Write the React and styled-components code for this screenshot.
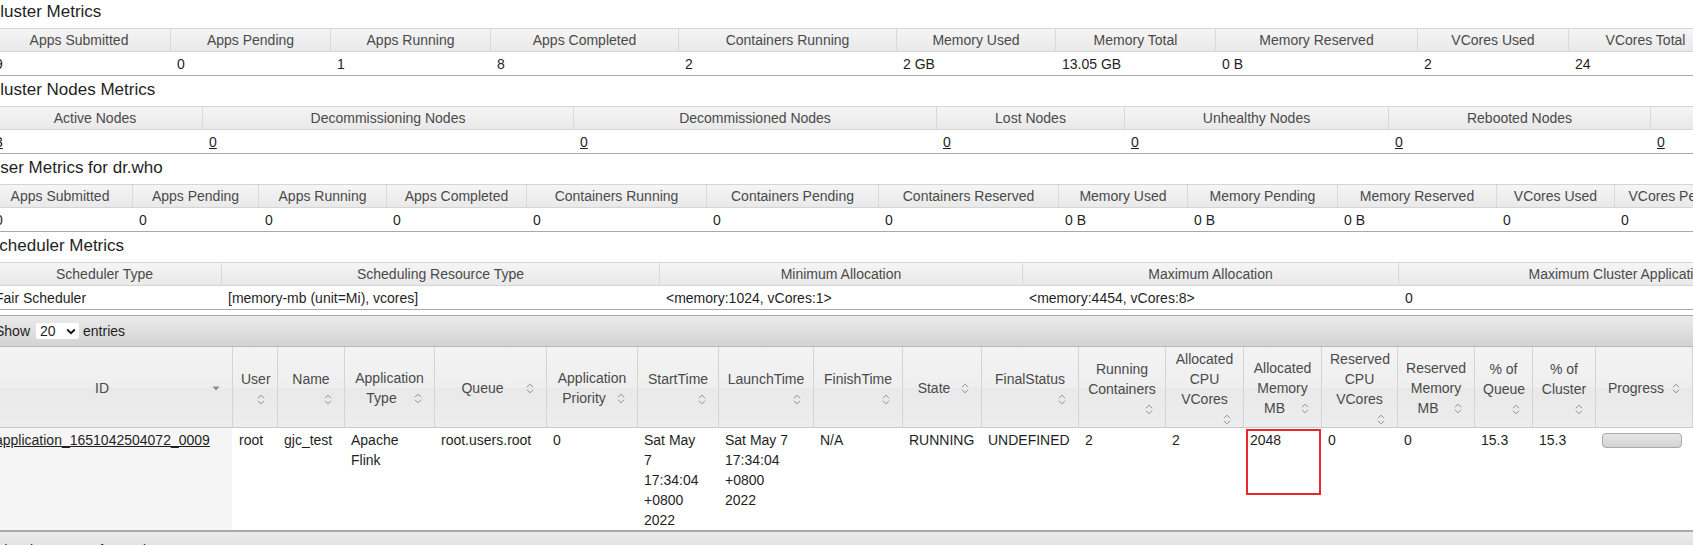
import React from 'react'
import styled, { createGlobalStyle } from 'styled-components'

const GlobalStyle = createGlobalStyle`
  *, *::before, *::after { box-sizing: border-box; }
  html, body { margin: 0; padding: 0; overflow: hidden; background: #fff; }
  body {
    font-family: "Liberation Sans", Arial, Helvetica, sans-serif;
    font-size: 14px;
    color: #1f1f1f;
  }
`

const Page = styled.div`
  width: 2200px;
  margin: -2px 0 0 -12px;
`

const SectionTitle = styled.div`
  height: 30px;
  padding: 4px 0 6px;
  font-size: 17px;
  line-height: 20px;
  white-space: nowrap;
`

const Table = styled.table`
  table-layout: fixed;
  border-collapse: separate;
  border-spacing: 0;
  width: ${(p) => p.$width}px;
`

const Col = styled.col`
  width: ${(p) => p.$w}px;
`

const MetricHead = styled.th`
  font-weight: normal;
  color: #4a4a4a;
  text-align: center;
  white-space: nowrap;
  overflow: hidden;
  padding: 1px 7px;
  line-height: 20px;
  background: linear-gradient(#f5f5f5, #e9e9e9);
  border-top: 1px solid #d5d5d5;
  border-bottom: 1px solid #d5d5d5;
  border-left: 1px solid #d9d9d9;
  &:first-child { border-left: none; }
`

const MetricCell = styled.td`
  padding: 2px 7px 1px;
  line-height: 20px;
  white-space: nowrap;
  border-bottom: 1px solid #a9a9a9;
`

const NodeLink = styled.a`
  color: inherit;
  text-decoration: underline;
`

const DataWrapper = styled.div`
  margin-top: 5px;
`

const Toolbar = styled.div`
  display: flex;
  align-items: center;
  height: 32px;
  padding: 0 7px;
  border-top: 1px solid #a8a8a8;
  border-bottom: 1px solid #b8b8b8;
  background: linear-gradient(#ebebeb, #d3d3d3);
  line-height: 20px;
`

const SelectBox = styled.div`
  display: flex;
  align-items: center;
  justify-content: space-between;
  width: 43px;
  height: 16px;
  margin: 0 4px 0 6px;
  padding: 0 3px 0 4px;
  background: #fff;
  border-radius: 2px;
`

const AppsHead = styled.th`
  font-weight: normal;
  color: #4a4a4a;
  text-align: center;
  vertical-align: middle;
  padding: 2px 8px 0;
  line-height: 20px;
  background: linear-gradient(#f3f3f3 0%, #efefef 50%, #e9e9e9 51%, #ededed 100%);
  border-left: 1px solid #d4d4d4;
  border-bottom: 1px solid #c9c9c9;
  &:first-child { border-left: none; }
`

const SortIcon = styled.span`
  float: right;
  display: flex;
  align-items: center;
  justify-content: center;
  width: 16px;
  height: 16px;
  margin-top: 2px;
`

const AppsCell = styled.td`
  position: relative;
  vertical-align: top;
  padding: 2px 15px 0 7px;
  line-height: 20px;
  border-bottom: 1px solid #acacac;
  background: ${(p) => (p.$sorted ? '#f5f5f5' : '#fff')};
`

const Highlight = styled.div`
  position: absolute;
  left: 3px;
  top: 1px;
  width: 75px;
  height: 66px;
  border: 2px solid #e8262b;
  pointer-events: none;
`

const ProgressBar = styled.div`
  width: 80px;
  height: 15px;
  margin-top: 3px;
  border: 1px solid #a9a9a9;
  border-radius: 4px;
  background: linear-gradient(#e6e6e6, #d4d4d4);
`

const Footer = styled.div`
  display: flex;
  justify-content: space-between;
  height: 40px;
  padding: 8px 7px;
  line-height: 20px;
  border-top: 1px solid #a8a8a8;
  background: linear-gradient(#ebebeb, #d3d3d3);
`

const sum = (cols) => cols.reduce((a, b) => a + b, 0)

const sections = [
  {
    title: 'Cluster Metrics',
    cols: [182, 160, 160, 188, 218, 159, 160, 202, 151, 154, 150],
    heads: ['Apps Submitted', 'Apps Pending', 'Apps Running', 'Apps Completed', 'Containers Running', 'Memory Used', 'Memory Total', 'Memory Reserved', 'VCores Used', 'VCores Total', 'VCores Reserved'],
    values: ['9', '0', '1', '8', '2', '2 GB', '13.05 GB', '0 B', '2', '24', '0'],
  },
  {
    title: 'Cluster Nodes Metrics',
    cols: [214, 371, 363, 188, 264, 262, 200],
    heads: ['Active Nodes', 'Decommissioning Nodes', 'Decommissioned Nodes', 'Lost Nodes', 'Unhealthy Nodes', 'Rebooted Nodes', 'Shutdown Nodes'],
    values: ['3', '0', '0', '0', '0', '0', '0'],
    linked: true,
  },
  {
    title: 'User Metrics for dr.who',
    cols: [144, 126, 128, 140, 180, 172, 180, 129, 150, 159, 118, 130, 150],
    heads: ['Apps Submitted', 'Apps Pending', 'Apps Running', 'Apps Completed', 'Containers Running', 'Containers Pending', 'Containers Reserved', 'Memory Used', 'Memory Pending', 'Memory Reserved', 'VCores Used', 'VCores Pending', 'VCores Reserved'],
    values: ['0', '0', '0', '0', '0', '0', '0', '0 B', '0 B', '0 B', '0', '0', '0'],
  },
  {
    title: 'Scheduler Metrics',
    cols: [233, 438, 363, 376, 488],
    heads: ['Scheduler Type', 'Scheduling Resource Type', 'Minimum Allocation', 'Maximum Allocation', 'Maximum Cluster Application Priority'],
    values: ['Fair Scheduler', '[memory-mb (unit=Mi), vcores]', '<memory:1024, vCores:1>', '<memory:4454, vCores:8>', '0'],
  },
]

const appColumns = [
  { label: 'ID', w: 244, sort: 'desc' },
  { label: 'User', w: 45 },
  { label: 'Name', w: 67 },
  { label: 'Application Type', w: 90 },
  { label: 'Queue', w: 112 },
  { label: 'Application Priority', w: 91 },
  { label: 'StartTime', w: 81 },
  { label: 'LaunchTime', w: 95 },
  { label: 'FinishTime', w: 89 },
  { label: 'State', w: 79 },
  { label: 'FinalStatus', w: 97 },
  { label: 'Running Containers', w: 87 },
  { label: 'Allocated CPU VCores', w: 78 },
  { label: 'Allocated Memory MB', w: 78 },
  { label: 'Reserved CPU VCores', w: 76 },
  { label: 'Reserved Memory MB', w: 77 },
  { label: '% of Queue', w: 58 },
  { label: '% of Cluster', w: 63 },
  { label: 'Progress', w: 97 },
  { label: 'Tracking UI', w: 130 },
  { label: 'Blacklisted Nodes', w: 110 },
]

const appRow = [
  'root', 'gjc_test', 'Apache Flink', 'root.users.root', '0',
  'Sat May 7 17:34:04 +0800 2022', 'Sat May 7 17:34:04 +0800 2022', 'N/A',
  'RUNNING', 'UNDEFINED', '2', '2',
]

function SortArrows() {
  return (
    <svg width="8" height="11" viewBox="0 0 8 11">
      <path d="M1 4.2 L4 1.2 L7 4.2 M1 6.8 L4 9.8 L7 6.8" fill="none" stroke="#8c8c8c" strokeWidth="1" />
    </svg>
  )
}

function SortDesc() {
  return (
    <svg width="8" height="5" viewBox="0 0 8 5">
      <path d="M0.5 0.5 L7.5 0.5 L4 4.5 Z" fill="#8a8a8a" />
    </svg>
  )
}

function MetricsSection({ title, cols, heads, values, linked }) {
  return (
    <section>
      <SectionTitle>{title}</SectionTitle>
      <Table $width={sum(cols)}>
        <colgroup>
          {cols.map((w, i) => <Col key={i} $w={w} />)}
        </colgroup>
        <thead>
          <tr>
            {heads.map((h) => <MetricHead key={h}>{h}</MetricHead>)}
          </tr>
        </thead>
        <tbody>
          <tr>
            {values.map((v, i) => (
              <MetricCell key={i}>
                {linked ? <NodeLink href="#">{v}</NodeLink> : v}
              </MetricCell>
            ))}
          </tr>
        </tbody>
      </Table>
    </section>
  )
}

function AppsTable() {
  return (
    <DataWrapper>
      <Toolbar>
        <span>Show</span>
        <SelectBox>
          <span>20</span>
          <svg width="10" height="7" viewBox="0 0 10 7">
            <path d="M1.2 1.5 L5 5.2 L8.8 1.5" fill="none" stroke="#111" strokeWidth="1.8" />
          </svg>
        </SelectBox>
        <span>entries</span>
      </Toolbar>
      <Table $width={sum(appColumns.map((c) => c.w))}>
        <colgroup>
          {appColumns.map((c) => <Col key={c.label} $w={c.w} />)}
        </colgroup>
        <thead>
          <tr>
            {appColumns.map((c) => (
              <AppsHead key={c.label}>
                {c.label}
                <SortIcon>{c.sort === 'desc' ? <SortDesc /> : <SortArrows />}</SortIcon>
              </AppsHead>
            ))}
          </tr>
        </thead>
        <tbody>
          <tr>
            <AppsCell $sorted>
              <NodeLink href="#">application_1651042504072_0009</NodeLink>
            </AppsCell>
            {appRow.map((v, i) => <AppsCell key={i}>{v}</AppsCell>)}
            <AppsCell>
              2048
              <Highlight />
            </AppsCell>
            <AppsCell>0</AppsCell>
            <AppsCell>0</AppsCell>
            <AppsCell>15.3</AppsCell>
            <AppsCell>15.3</AppsCell>
            <AppsCell>
              <ProgressBar />
            </AppsCell>
            <AppsCell>
              <NodeLink href="#">ApplicationMaster</NodeLink>
            </AppsCell>
            <AppsCell>0</AppsCell>
          </tr>
        </tbody>
      </Table>
      <Footer>
        <span>Showing 1 to 1 of 1 entries</span>
        <span>First Previous 1 Next Last</span>
      </Footer>
    </DataWrapper>
  )
}

export default function App() {
  return (
    <>
      <GlobalStyle />
      <Page>
        {sections.map((s) => <MetricsSection key={s.title} {...s} />)}
        <AppsTable />
      </Page>
    </>
  )
}
